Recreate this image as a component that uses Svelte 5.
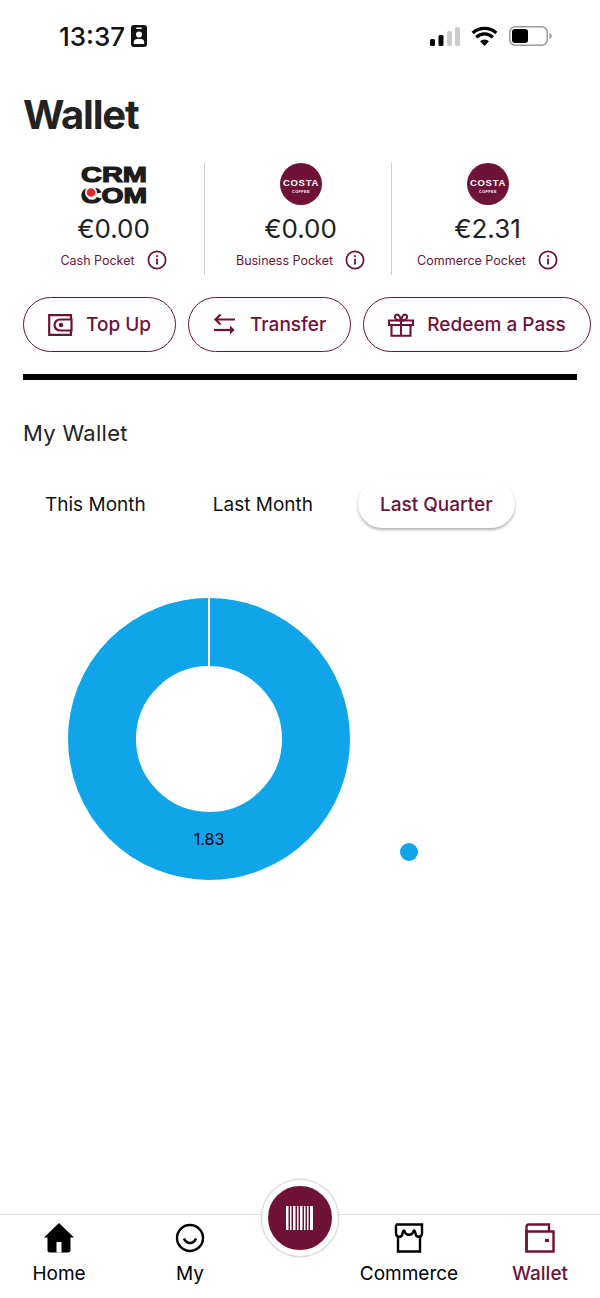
<script>
	const pockets = [
		{ logo: 'crm', amount: '€0.00', label: 'Cash Pocket' },
		{ logo: 'costa', amount: '€0.00', label: 'Business Pocket' },
		{ logo: 'costa', amount: '€2.31', label: 'Commerce Pocket' }
	];
	const tabs = ['This Month', 'Last Month', 'Last Quarter'];
	let activeTab = $state('Last Quarter');
</script>

<div class="screen">
	<div class="status">
		<div class="time">
			<span>13:37</span>
			<svg width="16" height="22" viewBox="0 0 16 22">
				<rect width="16" height="22" rx="3" fill="#111" />
				<rect x="5" y="2.5" width="6" height="1.6" rx="0.8" fill="#fff" />
				<circle cx="8" cy="9.5" r="3" fill="#fff" />
				<path d="M2.8 19v-2c0-2 2-3.2 5.2-3.2s5.2 1.200 5.200 3.200v2z" fill="#fff" />
			</svg>
		</div>
		<div class="status-icons">
			<svg width="30" height="19" viewBox="0 0 30 19">
				<rect x="0" y="12" width="5" height="7" rx="1.500" fill="#000" />
				<rect x="8.500" y="8" width="5" height="11" rx="1.500" fill="#000" />
				<rect x="17" y="4" width="5" height="15" rx="1.500" fill="#ccc" />
				<rect x="25" y="0" width="5" height="19" rx="1.500" fill="#ccc" />
			</svg>
			<svg width="27" height="20" viewBox="0 0 27 20">
				<path d="M13.500 20 9 15.200a6.500 6.500 0 0 1 9 0z" fill="#000" />
				<path d="M5.200 11.200a12 12 0 0 1 16.600 0M1.700 7a17.500 17.500 0 0 1 23.600 0" fill="none" stroke="#000" stroke-width="3.400" />
			</svg>
			<svg width="43" height="20" viewBox="0 0 43 20">
				<rect x="0.750" y="0.750" width="37.500" height="18.500" rx="5.500" fill="#fff" stroke="#999" stroke-width="1.500" />
				<rect x="3" y="3" width="16" height="14" rx="3" fill="#000" />
				<path d="M40.500 7c1.500.5 2.300 1.500 2.300 3s-.8 2.500-2.300 3z" fill="#999" />
			</svg>
		</div>
	</div>

	<h1>Wallet</h1>

	<div class="pockets">
		{#each pockets as pocket}
			<div class="pocket">
				{#if pocket.logo === 'crm'}
					<svg class="logo" width="68" height="42" viewBox="0 0 68 42">
						<text x="34" y="18.500" text-anchor="middle" textLength="66" lengthAdjust="spacingAndGlyphs" class="crm-text">CRM</text>
						<text x="34" y="39.500" text-anchor="middle" textLength="66" lengthAdjust="spacingAndGlyphs" class="crm-text">COM</text>
						<circle cx="11" cy="29.500" r="6" fill="#fff" />
						<circle cx="11" cy="29.500" r="4.300" fill="#e8262a" />
					</svg>
				{:else}
					<svg class="logo" width="42" height="42" viewBox="0 0 42 42">
						<circle cx="21" cy="21" r="21" fill="#6f1237" />
						<text x="21" y="23" text-anchor="middle" class="costa-text">COSTA</text>
						<text x="21" y="29.500" text-anchor="middle" class="coffee-text">COFFEE</text>
					</svg>
				{/if}
				<div class="amount">{pocket.amount}</div>
				<div class="pocket-label">
					<span>{pocket.label}</span>
					<svg width="20" height="20" viewBox="0 0 20 20">
						<circle cx="10" cy="10" r="8.600" fill="none" stroke="#6f1237" stroke-width="1.700" />
						<rect x="9.100" y="8.600" width="1.800" height="6" fill="#6f1237" />
						<rect x="9.100" y="5.200" width="1.800" height="1.900" fill="#6f1237" />
					</svg>
				</div>
			</div>
		{/each}
	</div>

	<div class="actions">
		<button class="action">
			<svg width="25" height="22" viewBox="0 0 25 22" fill="none" stroke="#6f1237" stroke-width="2.200">
				<path d="M23 5V1.200H1.200v19.600H23V17" />
				<path d="M23.500 5.500H12a5.500 5.500 0 0 0 0 11h11.500z" />
				<circle cx="13" cy="11" r="1.200" fill="#6f1237" />
			</svg>
			Top Up
		</button>
		<button class="action">
			<svg width="24" height="22" viewBox="0 0 24 22" fill="none" stroke="#6f1237" stroke-width="2.200">
				<path d="M2 6h20M7.500 1 2.500 6l5 5" transform="translate(0 -0.500)" />
				<path d="M1 16h20" />
				<path d="M17 11.500 21.500 16 17 20.500z" fill="#6f1237" stroke="none" />
			</svg>
			Transfer
		</button>
		<button class="action">
			<svg width="26" height="24" viewBox="0 0 26 24" fill="none" stroke="#6f1237" stroke-width="2.100">
				<path d="M1 7.500h24v4.500H1zM3.500 12v10.800h19V12M13 7.500v15.300" />
				<path d="M13 7.500C8 7.500 6.500 5.500 7 3.200 7.600 .8 11.500.5 13 7.500c1.500-7 5.400-6.700 6-4.300.5 2.300-1 4.300-6 4.300z" />
			</svg>
			Redeem a Pass
		</button>
	</div>

	<div class="rule"></div>

	<h2>My Wallet</h2>

	<div class="tabs">
		{#each tabs as tab}
			<button class="tab" class:active={activeTab === tab} onclick={() => (activeTab = tab)}>{tab}</button>
		{/each}
	</div>

	<svg class="chart" width="360" height="290" viewBox="0 0 360 290">
		<circle cx="141" cy="141" r="107" fill="none" stroke="#10a5e9" stroke-width="68" />
		<rect x="140" y="0" width="2" height="70" fill="#fff" />
		<text x="141" y="246.500" text-anchor="middle" class="slice-label">1.83</text>
		<circle cx="341" cy="254" r="9" fill="#10a5e9" />
	</svg>

	<nav>
		<a class="nav-item" href="#home">
			<svg width="32" height="30" viewBox="0 0 32 30">
				<path d="M16 0 31 14.500h-3.500V27a2.500 2.500 0 0 1-2.500 2.500H7A2.500 2.500 0 0 1 4.500 27V14.500H1z" fill="#000" />
				<rect x="13.500" y="19" width="5" height="10.500" fill="#fff" />
				<rect x="15" y="20.500" width="2" height="9" fill="#000" opacity="0" />
			</svg>
			<span>Home</span>
		</a>
		<a class="nav-item" href="#my">
			<svg width="30" height="30" viewBox="0 0 30 30" fill="none" stroke="#000" stroke-width="2.400">
				<circle cx="15" cy="15" r="13" />
				<path d="M9 15.500c1.500 3.500 3.500 4.500 6 4.500s4.500-1 6-4.500" stroke-width="2.600" />
			</svg>
			<span>My</span>
		</a>
		<div class="nav-gap"></div>
		<a class="nav-item" href="#commerce">
			<svg width="30" height="30" viewBox="0 0 30 30" fill="none" stroke="#000" stroke-width="2.400">
				<path d="M2 1.500h26v7.500l-1 7H3l-1-7z" stroke="none" />
				<path d="M2 1.500h26V10M2 1.500V10M4 14v14.500h22V14" />
				<path d="M2 10c0 5 6 5 6.500 .5C9 7 10 7 10.500 8c1 5 8 5 9 0 .5-1 1.500-1 2 2.500C22 15 28 15 28 10" />
			</svg>
			<span>Commerce</span>
		</a>
		<a class="nav-item current" href="#wallet">
			<svg width="30" height="30" viewBox="0 0 30 30" fill="none" stroke="#6f1237" stroke-width="2.400">
				<path d="M1.500 29V3.500a2 2 0 0 1 2-2h20.500V8" />
				<path d="M1.500 8.500h27V28.500h-27z" />
				<rect x="20" y="16" width="4" height="3" fill="#6f1237" stroke="none" />
			</svg>
			<span>Wallet</span>
		</a>
		<button class="scan" aria-label="Scan barcode">
			<svg width="28" height="24" viewBox="0 0 28 24" fill="#fff">
				<rect x="0" width="2.500" height="24" />
				<rect x="4" width="1.500" height="24" />
				<rect x="7" width="2.500" height="24" />
				<rect x="11" width="1.500" height="24" />
				<rect x="14" width="2.500" height="24" />
				<rect x="18" width="1.500" height="24" />
				<rect x="21" width="1.500" height="24" />
				<rect x="24" width="3" height="24" />
			</svg>
		</button>
	</nav>
</div>

<style>
	:global(body) {
		margin: 0;
		background: #fff;
	}

	.screen {
		display: flex;
		flex-direction: column;
		width: 600px;
		height: 1298px;
		overflow: hidden;
		font-family: Inter, 'Liberation Sans', sans-serif;
		color: #222;
	}

	.status {
		display: flex;
		justify-content: space-between;
		align-items: center;
		height: 72px;
		padding: 0 48px 0 59px;
		box-sizing: border-box;
	}

	.time {
		display: flex;
		align-items: center;
		gap: 6px;
		font-size: 26px;
		font-weight: 500;
		color: #111;
	}

	.status-icons {
		display: flex;
		align-items: center;
		gap: 11px;
	}

	h1 {
		margin: 18px 0 0 23px;
		font-size: 40px;
		line-height: 50px;
		font-weight: 700;
		letter-spacing: -1.2px;
	}

	.pockets {
		display: grid;
		grid-template-columns: 181px 187px 187px;
		margin: 23px 22px 0 23px;
	}

	.pocket {
		display: flex;
		flex-direction: column;
		align-items: center;
		height: 112px;
		padding-left: 5px;
		box-sizing: border-box;
	}

	.pocket:first-child {
		padding-left: 0;
	}

	.pocket + .pocket {
		border-left: 1.500px solid #ccc;
	}

	.pocket:nth-child(1) {
		border-right: 0;
	}

	.logo {
		flex: none;
	}

	.crm-text {
		font-family: 'Liberation Sans', sans-serif;
		font-size: 22px;
		font-weight: 700;
		fill: #1c1c1c;
		stroke: #1c1c1c;
		stroke-width: 1.200px;
	}

	.costa-text {
		font-family: 'Liberation Sans', sans-serif;
		font-size: 9.500px;
		font-weight: 700;
		letter-spacing: 0.700px;
		fill: #fff;
	}

	.coffee-text {
		font-family: 'Liberation Sans', sans-serif;
		font-size: 3.800px;
		font-weight: 700;
		letter-spacing: 0.400px;
		fill: #fff;
	}

	.amount {
		margin-top: 9px;
		font-size: 26px;
		line-height: 30px;
		color: #222;
	}

	.pocket-label {
		display: flex;
		align-items: center;
		gap: 12px;
		margin-top: 6px;
		font-size: 12.500px;
		color: #6f1237;
	}

	.actions {
		display: flex;
		gap: 12px;
		margin: 22px 0 0 23px;
	}

	.action {
		display: flex;
		align-items: center;
		justify-content: center;
		gap: 13px;
		height: 55px;
		padding: 0 24px;
		border: 1.500px solid #6f1237;
		border-radius: 28px;
		background: #fff;
		font-family: inherit;
		font-size: 19px;
		font-weight: 500;
		color: #6f1237;
	}

	.rule {
		height: 6px;
		margin: 22px 23px 0;
		background: #000;
	}

	h2 {
		margin: 40px 0 0 23px;
		font-size: 22px;
		line-height: 26px;
		font-weight: 400;
		letter-spacing: 0.300px;
	}

	.tabs {
		display: flex;
		gap: 23px;
		margin: 34px 0 0 23px;
	}

	.tab {
		height: 48px;
		padding: 0 22px;
		border: 0;
		border-radius: 24px;
		background: none;
		font-family: inherit;
		font-size: 19px;
		color: #111;
	}

	.tab.active {
		background: #fff;
		color: #6f1237;
		font-weight: 500;
		box-shadow: 0 2px 3px rgba(0, 0, 0, 0.3);
	}

	.chart {
		display: block;
		margin: 70px 0 0 68px;
	}

	nav {
		position: relative;
		display: grid;
		grid-template-columns: 118px 144px 1fr 142px 120px;
		height: 84px;
		margin-top: auto;
		border-top: 1.500px solid #ddd;
		box-sizing: border-box;
	}

	.nav-item {
		display: flex;
		flex-direction: column;
		align-items: center;
		gap: 9px;
		padding-top: 8px;
		font-size: 19px;
		color: #000;
		text-decoration: none;
	}

	.nav-item svg {
		flex: none;
	}

	.nav-item.current {
		color: #6f1237;
		font-weight: 500;
	}

	.scan {
		position: absolute;
		left: 262px;
		top: -35px;
		display: flex;
		align-items: center;
		justify-content: center;
		width: 76px;
		height: 76px;
		padding: 0;
		border: 6px solid #fff;
		border-radius: 50%;
		background: #6f1237;
		box-shadow: 0 0 0 1.500px #ddd;
		box-sizing: border-box;
	}
</style>
